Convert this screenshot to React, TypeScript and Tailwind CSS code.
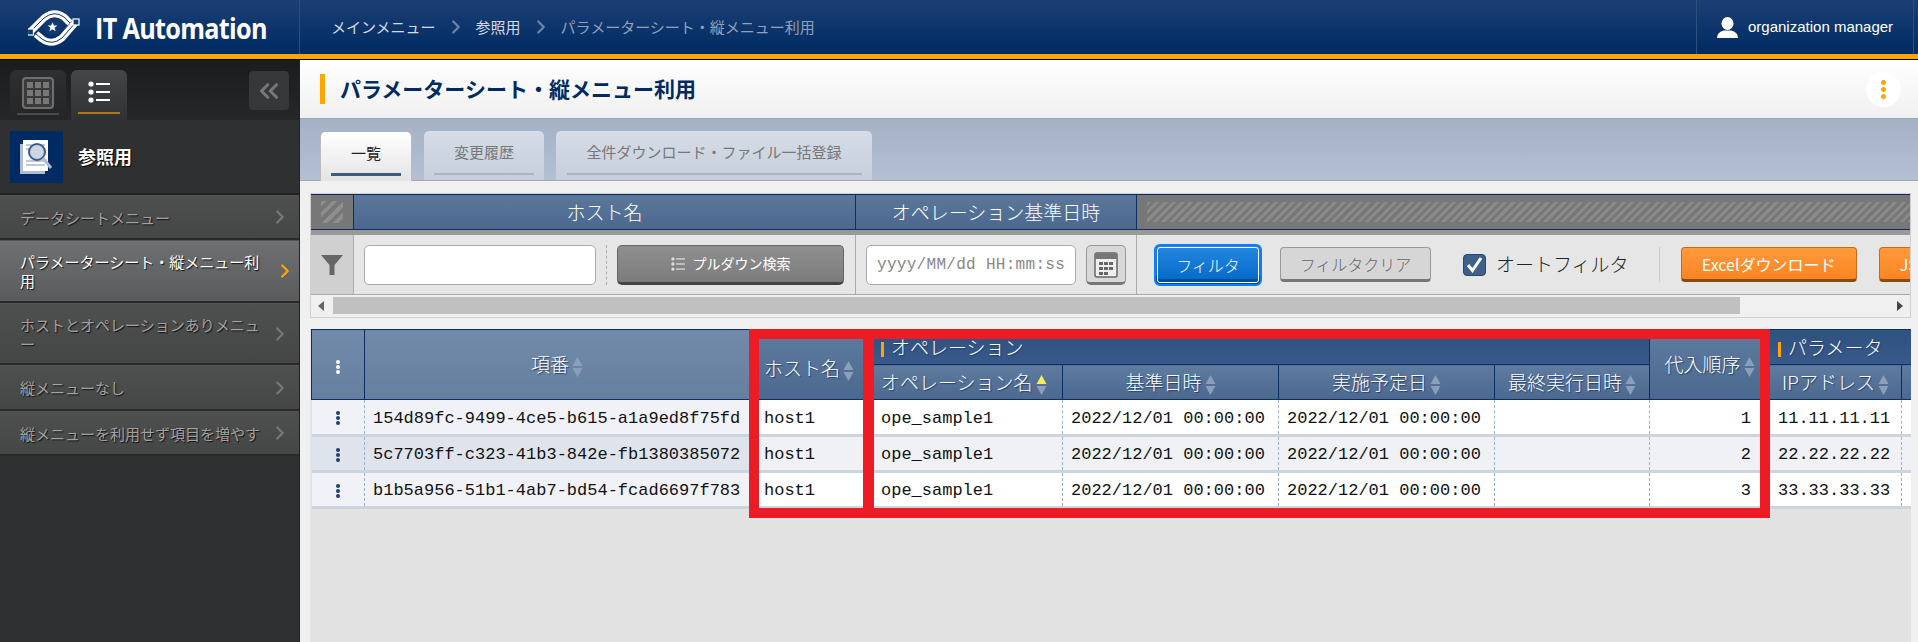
import { ChevronRight, ChevronsLeft } from 'lucide-react'

const menu = [
  { label: 'データシートメニュー', h: 'h-[45px]' },
  { label: 'パラメーターシート・縦メニュー利用', h: 'h-[63px]', active: true },
  { label: 'ホストとオペレーションありメニュー', h: 'h-[62px]' },
  { label: '縦メニューなし', h: 'h-[46px]' },
  { label: '縦メニューを利用せず項目を増やす', h: 'h-[45px]' },
]

const rows = [
  { id: '154d89fc-9499-4ce5-b615-a1a9ed8f75fd', order: 1, ip: '11.11.11.11' },
  { id: '5c7703ff-c323-41b3-842e-fb1380385072', order: 2, ip: '22.22.22.22' },
  { id: 'b1b5a956-51b1-4ab7-bd54-fcad6697f783', order: 3, ip: '33.33.33.33' },
]

function Logo() {
  return (
    <svg width="54" height="38" viewBox="10 5 54 38" fill="none">
      <path d="M12 29 L26 15 Q36 7 46 14 L52 20" stroke="#fff" strokeWidth="7" />
      <path d="M12 29 L26 15 Q36 7 46 14 L52 20" stroke="#123a70" strokeWidth="1" />
      <path d="M58 19 L44 35 Q34 43 24 36 L18 31" stroke="#fff" strokeWidth="7" />
      <path d="M58 19 L44 35 Q34 43 24 36 L18 31" stroke="#123a70" strokeWidth="1" />
      <rect x="9.5" y="26" width="6" height="6" fill="#123a70" stroke="#fff" strokeWidth="1.2" />
      <rect x="55" y="16" width="6" height="6" fill="#123a70" stroke="#fff" strokeWidth="1.2" />
      <circle cx="34.5" cy="24" r="8" fill="#123a70" />
      <polygon
        points="34.5,19.2 35.9,22.6 39.4,22.6 36.6,24.8 37.6,28.2 34.5,26.2 31.4,28.2 32.4,24.8 29.6,22.6 33.1,22.6"
        fill="#fff"
      />
    </svg>
  )
}

function SortArrows({ active }: { active?: boolean }) {
  return (
    <svg width="11" height="20" viewBox="0 0 11 20" className="inline-block align-middle ml-[3px] shrink-0">
      <polygon points="5.5,0 10.5,9 0.5,9" fill={active ? '#f4ec5a' : '#8c9fb9'} />
      <polygon points="5.5,20 10.5,11 0.5,11" fill="#8c9fb9" />
    </svg>
  )
}

function RowDots({ className }: { className: string }) {
  return (
    <span className="inline-flex flex-col items-center gap-px align-middle">
      <span className={`w-[4px] h-[4px] rounded-full ${className}`} />
      <span className={`w-[4px] h-[4px] rounded-full ${className}`} />
      <span className={`w-[4px] h-[4px] rounded-full ${className}`} />
    </span>
  )
}

function ListIcon({ color, w = 16 }: { color: string; w?: number }) {
  return (
    <svg width={w} height={w} viewBox="0 0 22 22" fill={color}>
      <circle cx="3" cy="3" r="2.6" />
      <circle cx="3" cy="11" r="2.6" />
      <circle cx="3" cy="19" r="2.6" />
      <rect x="8" y="2" width="14" height="2" />
      <rect x="8" y="10" width="14" height="2" />
      <rect x="8" y="18" width="14" height="2" />
    </svg>
  )
}

function Header() {
  return (
    <header className="h-[54px] flex bg-gradient-to-b from-[#1b4075] to-[#002a62] shrink-0">
      <div className="w-[300px] border-r border-[#2c4f80] flex items-center pl-[28px] gap-[13px] overflow-hidden">
        <Logo />
        <span className="text-white text-[29px] font-bold font-['Open_Sans',sans-serif] tracking-[-0.8px] leading-none origin-left scale-x-[0.87] whitespace-nowrap">
          IT Automation
        </span>
      </div>
      <nav className="flex-1 flex items-center pl-[31px] text-[15px]">
        <span className="text-[#d3dbe6]">メインメニュー</span>
        <ChevronRight className="w-[22px] h-[22px] mx-[9px] text-[#6b84a6]" strokeWidth={2.5} />
        <span className="text-[#d3dbe6]">参照用</span>
        <ChevronRight className="w-[22px] h-[22px] mx-[9px] text-[#6b84a6]" strokeWidth={2.5} />
        <span className="text-[#90a2ba]">パラメーターシート・縦メニュー利用</span>
      </nav>
      <div className="w-[218px] mr-[4px] border-x border-[#2c4f80] flex items-center pl-[20px] gap-[10px]">
        <svg width="21" height="21" viewBox="0 0 21 21" fill="#fff">
          <ellipse cx="10.5" cy="6.5" rx="6" ry="6.5" />
          <path d="M0 21 Q0 15 7 13.5 L14 13.5 Q21 15 21 21 Z" />
        </svg>
        <span className="text-white text-[15px] font-['Liberation_Sans',sans-serif]">organization manager</span>
      </div>
    </header>
  )
}

function Sidebar() {
  return (
    <aside className="w-[300px] shrink-0 bg-[#2f3031] border-r border-[#222]">
      <div className="h-[60px] flex pl-[10px] pr-[10px] pt-[10px] bg-gradient-to-b from-[#1b1c1d] to-[#262728]">
        <div className="w-[56px] h-[50px] rounded-t-[6px] bg-gradient-to-b from-[#2e2f30] to-[#242526] flex flex-col items-center">
          <svg width="32" height="32" viewBox="0 0 32 32" className="mt-[7px]">
            <rect x="1" y="1" width="30" height="30" rx="3" fill="#3a3a3a" stroke="#6f6f6f" strokeWidth="2" />
            <g fill="#777">
              <rect x="5" y="5" width="6" height="6" />
              <rect x="13" y="5" width="6" height="6" />
              <rect x="21" y="5" width="6" height="6" />
              <rect x="5" y="13" width="6" height="6" />
              <rect x="13" y="13" width="6" height="6" />
              <rect x="21" y="13" width="6" height="6" />
              <rect x="5" y="21" width="6" height="6" />
              <rect x="13" y="21" width="6" height="6" />
              <rect x="21" y="21" width="6" height="6" />
            </g>
          </svg>
          <div className="w-[42px] h-[2px] bg-[#4a4a4a] mt-[4px]" />
        </div>
        <div className="w-[56px] h-[50px] ml-[5px] rounded-t-[6px] bg-gradient-to-b from-[#454647] to-[#303132] flex flex-col items-center">
          <div className="mt-[11px] h-[22px]">
            <ListIcon color="#fff" w={22} />
          </div>
          <div className="w-[42px] h-[2px] bg-[#a8761c] mt-[9px]" />
        </div>
        <div className="ml-auto w-[40px] h-[39px] mt-[1px] rounded-[4px] bg-[#363738] flex items-center justify-center">
          <ChevronsLeft className="w-[30px] h-[30px] text-[#777]" strokeWidth={2.5} />
        </div>
      </div>
      <div className="h-[75px] flex items-center pl-[10px] border-b-2 border-[#222]">
        <div className="w-[53px] h-[52px] bg-[#002a62] flex items-center justify-center">
          <svg width="38" height="38" viewBox="0 0 38 38">
            <rect x="2" y="6" width="25" height="30" fill="#aebdd2" />
            <rect x="5" y="2" width="25" height="31" fill="#fff" />
            <g stroke="#7f93b0" strokeWidth="1">
              <line x1="8" y1="7" x2="27" y2="7" />
              <line x1="8" y1="11" x2="27" y2="11" />
              <line x1="8" y1="23" x2="27" y2="23" />
              <line x1="8" y1="27" x2="27" y2="27" />
            </g>
            <circle cx="19" cy="14" r="8" fill="#cdd6e3" stroke="#3b5b88" strokeWidth="2" />
            <line x1="25" y1="20" x2="33" y2="30" stroke="#aebdd2" strokeWidth="3" />
          </svg>
        </div>
        <span className="ml-[15px] text-white text-[18px] font-bold [text-shadow:1px_1px_1px_#000]">参照用</span>
      </div>
      <ul>
        {menu.map(item => (
          <li
            key={item.label}
            className={`${item.h} flex items-center pl-[20px] pr-[8px] border-b-2 border-[#2a2a2a] border-t border-t-[#555] text-[15px] leading-[19px] [text-shadow:1px_1px_1px_#111] ${
              item.active
                ? 'bg-gradient-to-b from-[#6f7071] to-[#5a5b5c] text-white'
                : 'bg-gradient-to-b from-[#4e4f4f] to-[#454646] text-[#a2a2a2]'
            }`}
          >
            <span className="w-[242px]">{item.label}</span>
            <ChevronRight
              className={`w-[22px] h-[22px] ml-auto shrink-0 ${item.active ? 'text-[#ffa500] translate-x-[5px]' : 'text-[#777]'}`}
              strokeWidth={2.5}
            />
          </li>
        ))}
      </ul>
    </aside>
  )
}

function Tabs() {
  return (
    <div className="h-[62px] shrink-0 flex items-end pl-[20px] gap-[12px] bg-gradient-to-b from-[#a5b2c6] to-[#b3bfd2] border-b border-[#a8a8a8]">
      <div className="w-[92px] h-[49px] -mb-px rounded-t-[5px] bg-gradient-to-b from-white to-[#e4e4e4] border-x border-[#bbb] flex flex-col items-center text-[15px] text-[#222] z-10">
        <span className="mt-[10px] leading-[22px]">一覧</span>
        <div className="w-[70px] h-[3px] bg-[#3c5a82] mt-[9px]" />
      </div>
      <div className="w-[120px] h-[49px] rounded-t-[5px] bg-gradient-to-b from-[#d6dde7] to-[#c6cedb] flex flex-col items-center text-[15px] text-[#777]">
        <span className="mt-[10px] leading-[22px]">変更履歴</span>
        <div className="w-[100px] h-[2px] bg-[#abb3c1] mt-[10px]" />
      </div>
      <div className="w-[316px] h-[49px] rounded-t-[5px] bg-gradient-to-b from-[#d6dde7] to-[#c6cedb] flex flex-col items-center text-[15px] text-[#777]">
        <span className="mt-[10px] leading-[22px]">全件ダウンロード・ファイル一括登録</span>
        <div className="w-[295px] h-[2px] bg-[#abb3c1] mt-[10px]" />
      </div>
    </div>
  )
}

function FilterPanel() {
  return (
    <div className="mt-[12px] mb-[11px] ml-[10px] mr-[7px] h-[125px] border border-[#d0d0d0] overflow-hidden bg-[#f0f0f0] shrink-0">
      <div className="flex h-[36px] border-y border-[#0c2f63] text-[19px] font-light text-white">
        <div className="w-[43px] shrink-0 bg-[#777] flex items-center justify-center border-r border-[#0c2f63]">
          <div className="w-[22px] h-[22px] bg-[repeating-linear-gradient(135deg,#8e8e8e_0,#8e8e8e_4px,#777_4px,#777_8px)]" />
        </div>
        <div className="w-[502px] shrink-0 bg-gradient-to-b from-[#5b779b] to-[#4b6890] border-r border-[#0c2f63] flex items-center justify-center">
          ホスト名
        </div>
        <div className="w-[281px] shrink-0 bg-gradient-to-b from-[#5b779b] to-[#4b6890] border-r border-[#0c2f63] flex items-center justify-center">
          オペレーション基準日時
        </div>
        <div className="flex-1 min-w-0 bg-[#777] flex items-center">
          <div className="w-full h-[20px] ml-[10px] bg-[repeating-linear-gradient(135deg,#8a8a8a_0,#8a8a8a_3px,#777_3px,#777_6px)]" />
        </div>
      </div>
      <div className="h-[5px] bg-[#999]" />
      <div className="flex h-[60px] border-b border-[#aaa] bg-[#e6e6e6]">
        <div className="w-[43px] shrink-0 bg-[#d0d0d0] border-r border-[#aaa] flex items-center justify-center">
          <svg width="22" height="22" viewBox="0 0 22 22" fill="#666">
            <path d="M0 1 H22 L13.5 11 V21 H8.5 V11 Z" />
          </svg>
        </div>
        <div className="w-[502px] shrink-0 border-r border-[#aaa] flex items-center pl-[10px]">
          <div className="w-[232px] h-[40px] rounded-[5px] bg-white border border-[#aaa]" />
          <div className="h-[40px] ml-[10px] border-l border-dashed border-[#aaa]" />
          <div className="w-[227px] h-[40px] ml-[10px] rounded-[5px] bg-gradient-to-b from-[#8f8f8f] to-[#7c7c7c] border border-[#666] border-b-[3px] border-b-[#444] flex items-center justify-center gap-[8px] text-[14px] text-white">
            <ListIcon color="#ddd" w={14} />
            プルダウン検索
          </div>
        </div>
        <div className="w-[281px] shrink-0 border-r border-[#aaa] flex items-center pl-[10px]">
          <div className="w-[210px] h-[40px] rounded-[5px] bg-white border border-[#aaa] flex items-center pl-[10px] text-[16px] text-[#888] font-['Liberation_Mono',monospace] tracking-[0.3px]">
            yyyy/MM/dd HH:mm:ss
          </div>
          <div className="w-[40px] h-[40px] ml-[10px] rounded-[5px] bg-[#d8d8d8] border border-[#999] border-b-[3px] border-b-[#777] flex items-center justify-center">
            <svg width="24" height="28" viewBox="0 0 24 28">
              <rect x="1" y="3" width="22" height="24" rx="2" fill="#eee" stroke="#666" strokeWidth="1.5" />
              <rect x="1" y="3" width="22" height="6" fill="#777" />
              <g fill="#666">
                <rect x="5" y="12" width="4" height="3" />
                <rect x="10" y="12" width="4" height="3" />
                <rect x="15" y="12" width="4" height="3" />
                <rect x="5" y="17" width="4" height="3" />
                <rect x="10" y="17" width="4" height="3" />
                <rect x="15" y="17" width="4" height="3" />
                <rect x="5" y="22" width="4" height="3" />
                <rect x="10" y="22" width="4" height="3" />
              </g>
            </svg>
          </div>
        </div>
        <div className="flex-1 min-w-0 overflow-hidden flex items-center pl-[17px] whitespace-nowrap">
          <div className="w-[108px] h-[42px] shrink-0 rounded-[6px] bg-gradient-to-b from-[#2388df] to-[#0068c8] border-2 border-[#0a7cff] outline outline-1 -outline-offset-4 outline-white flex items-center justify-center text-[16px] font-light text-white shadow-[inset_0_-5px_0_#024a8f]">
            フィルタ
          </div>
          <div className="w-[151px] h-[35px] shrink-0 ml-[18px] rounded-[4px] bg-[#d6d6d6] border border-[#999] border-b-[3px] border-b-[#777] flex items-center justify-center text-[16px] font-light text-[#666]">
            フィルタクリア
          </div>
          <div className="w-[23px] h-[22px] shrink-0 ml-[32px] rounded-[4px] bg-[#3f5f8d] border border-[#2c4670] flex items-center justify-center">
            <svg width="17" height="17" viewBox="0 0 17 17" fill="none" stroke="#fff" strokeWidth="3">
              <path d="M2 9 L6.5 14.5 L15 2" />
            </svg>
          </div>
          <span className="ml-[10px] text-[19px] font-light text-[#222]">オートフィルタ</span>
          <div className="h-[35px] ml-[30px] border-l border-[#ccc]" />
          <div className="w-[176px] h-[35px] ml-[21px] rounded-[4px] bg-gradient-to-b from-[#ff9a3c] to-[#fb8420] border border-[#c96a18] border-b-[3px] border-b-[#8a4a10] flex items-center justify-center text-[16px] text-white shrink-0">
            Excelダウンロード
          </div>
          <div className="w-[176px] h-[35px] ml-[22px] rounded-[4px] bg-gradient-to-b from-[#ff9a3c] to-[#fb8420] border border-[#c96a18] border-b-[3px] border-b-[#8a4a10] flex items-center pl-[20px] text-[16px] text-white shrink-0">
            JSONダウンロード
          </div>
        </div>
      </div>
      <div className="flex items-center h-[21px] px-[7px] gap-[4px]">
        <svg width="6" height="10" viewBox="0 0 6 10" fill="#666" className="shrink-0">
          <polygon points="6,0 6,10 0,5" />
        </svg>
        <div className="w-[1407px] h-[17px] ml-[5px] bg-[#c0c0c0]" />
        <svg width="6" height="10" viewBox="0 0 6 10" fill="#444" className="shrink-0 ml-auto">
          <polygon points="0,0 0,10 6,5" />
        </svg>
      </div>
    </div>
  )
}

const thBase = 'border border-[#0c2f63] font-light text-white text-[19px] [text-shadow:1px_1px_1px_#22406b]'
const thLight = `${thBase} bg-gradient-to-b from-[#728aaa] to-[#657f9f]`
const thSub = `${thBase} bg-gradient-to-b from-[#5f7b9f] to-[#4b6890]`
const thGroup = `${thBase} bg-gradient-to-b from-[#2f5280] to-[#38598a] text-left`
const td =
  'border-r border-dashed border-[#9fb0c5] border-b-[3px] border-b-[#ccd4e0] [border-bottom-style:solid] px-[8px] pt-[3px] text-[#111]'

function DataTable() {
  return (
    <div className="relative ml-px w-[1600px] h-[190px] overflow-hidden">
      <table className="table-fixed border-collapse w-[1650px] font-['Liberation_Mono','Noto_Sans_CJK_JP',monospace] text-[17px] whitespace-nowrap">
        <colgroup>
          <col className="w-[53px]" />
          <col className="w-[385px]" />
          <col className="w-[123px]" />
          <col className="w-[190px]" />
          <col className="w-[216px]" />
          <col className="w-[216px]" />
          <col className="w-[155px]" />
          <col className="w-[120px]" />
          <col className="w-[132px]" />
          <col className="w-[60px]" />
        </colgroup>
        <thead className="font-['Noto_Sans_CJK_JP',sans-serif]">
          <tr className="h-[35px]">
            <th rowSpan={2} className={thLight}>
              <RowDots className="bg-white" />
            </th>
            <th rowSpan={2} className={thLight}>
              項番
              <SortArrows />
            </th>
            <th rowSpan={2} className={`${thSub} text-left pl-[14px] pt-[8px]`}>
              ホスト名
              <SortArrows />
            </th>
            <th colSpan={4} className={`${thGroup} pl-[8px]`}>
              <span className="inline-block w-[3px] h-[15px] bg-[#ffa500] mr-[7px] align-middle" />
              オペレーション
            </th>
            <th rowSpan={2} className={thSub}>
              代入順序
              <SortArrows />
            </th>
            <th colSpan={2} className={`${thGroup} pl-[8px]`}>
              <span className="inline-block w-[3px] h-[15px] bg-[#ffa500] mr-[7px] align-middle" />
              パラメータ
            </th>
          </tr>
          <tr className="h-[35px]">
            <th className={`${thSub} text-left pl-[8px]`}>
              オペレーション名
              <SortArrows active />
            </th>
            <th className={thSub}>
              基準日時
              <SortArrows />
            </th>
            <th className={thSub}>
              実施予定日
              <SortArrows />
            </th>
            <th className={thSub}>
              最終実行日時
              <SortArrows />
            </th>
            <th className={thSub}>
              IPアドレス
              <SortArrows />
            </th>
            <th className={thSub} />
          </tr>
        </thead>
        <tbody>
          {rows.map((row, i) => (
            <tr key={row.id} className={`h-[36px] ${i === 1 ? 'bg-[#eff1f5]' : 'bg-white'}`}>
              <td className={`${td} text-center ${i === 1 ? 'bg-[#dfe4ec]' : 'bg-[#f0f2f7]'}`}>
                <RowDots className="bg-[#1d3f73]" />
              </td>
              <td className={`${td} ${i === 1 ? 'bg-[#dfe4ec]' : 'bg-[#f0f2f7]'}`}>{row.id}</td>
              <td className={`${td} pl-[14px]`}>host1</td>
              <td className={td}>ope_sample1</td>
              <td className={td}>2022/12/01 00:00:00</td>
              <td className={td}>2022/12/01 00:00:00</td>
              <td className={td} />
              <td className={`${td} text-right pr-[18px]`}>{row.order}</td>
              <td className={td}>{row.ip}</td>
              <td className={td} />
            </tr>
          ))}
        </tbody>
      </table>
      {/* red highlight frames over the table */}
      <div className="absolute left-[438px] top-0 w-[125px] h-[189px] border-[10px] border-[#ed1c24] pointer-events-none" />
      <div className="absolute left-[552px] top-0 w-[907px] h-[189px] border-[10px] border-[#ed1c24] pointer-events-none" />
    </div>
  )
}

export default function App() {
  return (
    <div className="w-[1918px] h-[642px] overflow-hidden flex flex-col bg-[#f0f0f0] font-['Noto_Sans_CJK_JP',sans-serif]">
      <Header />
      <div className="h-[5px] bg-[#ffa500] shrink-0" />
      <div className="h-px bg-black shrink-0" />
      <div className="flex-1 flex min-h-0">
        <Sidebar />
        <main className="flex-1 flex flex-col min-w-0">
          <div className="h-[59px] shrink-0 flex items-center pl-[20px] pr-[17px] bg-gradient-to-b from-white to-[#f0f0f0] border-b border-[#a0a8b5]">
            <div className="w-[5px] h-[30px] bg-[#ffa500]" />
            <h1 className="ml-[15px] text-[21px] font-bold text-[#002a62]">パラメーターシート・縦メニュー利用</h1>
            <div className="ml-auto w-[35px] h-[35px] rounded-full bg-white flex flex-col items-center justify-center gap-[2px]">
              <span className="w-[5px] h-[5px] rounded-full bg-[#ffa500]" />
              <span className="w-[5px] h-[5px] rounded-full bg-[#ffa500]" />
              <span className="w-[5px] h-[5px] rounded-full bg-[#ffa500]" />
            </div>
          </div>
          <Tabs />
          <FilterPanel />
          <div className="flex-1 ml-[10px] mr-[7px] bg-[#e2e2e2] min-h-0">
            <DataTable />
          </div>
        </main>
      </div>
    </div>
  )
}
